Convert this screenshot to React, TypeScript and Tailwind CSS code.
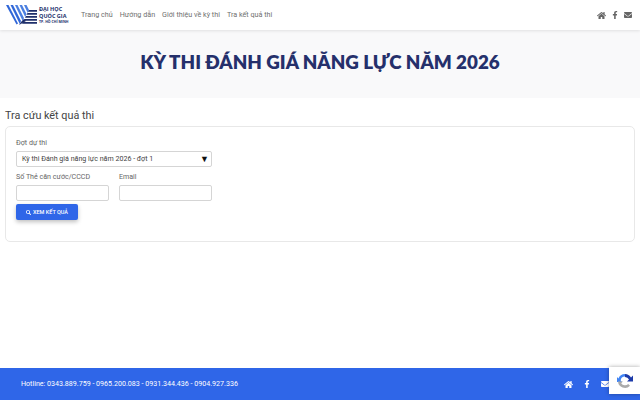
import { FaEnvelope, FaFacebookF, FaHome, FaSearch } from "react-icons/fa";

const navItems = ["Trang chủ", "Hướng dẫn", "Giới thiệu về kỳ thi", "Tra kết quả thi"];

const SocialIcons = ({ className }: { className: string }) => (
  <div className={`flex items-center ${className}`}>
    <FaHome className="size-[9px]" />
    <FaFacebookF className="size-[8px]" />
    <FaEnvelope className="size-[8px]" />
  </div>
);

const Logo = () => (
  <div className="flex h-[24px] w-[72px] items-center">
    <svg width="31" height="20" viewBox="0 0 31 20" className="shrink-0">
      <path d="M0 0h2.500l9.500 18.500 -1.500 1z" fill="#2f66d8" />
      <path d="M4.500 0h2.500l8 16 -1.200 3z" fill="#2f66d8" />
      <path d="M9 0h2.500l6.500 13 -1.300 3z" fill="#4b7fe0" />
      <path d="M13.500 0h2.500l4.500 9 -1.300 3z" fill="#4b7fe0" />
      <path d="M18 0h2.500l2.500 5 -1.300 3z" fill="#4b7fe0" />
      <path d="M13 20l2-3 3-3 2 2z" fill="#1f2f6b" />
      <path d="M23 5h8v1.800h-9zM21.500 8h9.500v1.800h-10.500zM20 11h11v1.800h-12zM18.500 14h12.500v1.800h-13.500zM17 17h14v1.800h-15z" fill="#1f2f6b" />
    </svg>
    <div className="ml-[2px] flex flex-col font-['Open_Sans',sans-serif] font-bold text-[#22306b]">
      <span className="text-[5.500px] leading-[6.500px]">ĐẠI HỌC</span>
      <span className="text-[5.500px] leading-[6.500px]">QUỐC GIA</span>
      <span className="text-[3.500px] leading-[5px]">TP. HỒ CHÍ MINH</span>
    </div>
  </div>
);

export default function App() {
  return (
    <div className="relative flex h-[400px] w-[640px] flex-col overflow-hidden bg-white font-['Roboto',sans-serif]">
      <header className="z-10 flex h-[30px] shrink-0 items-center bg-white pl-[6px] pr-[8px] shadow-[0_1px_3px_rgba(0,0,0,0.1)]">
        <Logo />
        <nav className="ml-[3px] flex gap-[7px] text-[7.200px] text-[#6f6f6f]">
          {navItems.map((item) => (
            <a key={item}>{item}</a>
          ))}
        </nav>
        <SocialIcons className="ml-auto gap-[5px] text-[#666666]" />
      </header>

      <section className="flex h-[68px] shrink-0 items-center justify-center bg-[#f9f9fa] pb-[3px]">
        <h1 className="font-['Lato',sans-serif] text-[18.800px] font-extrabold text-[#25306b]">
          KỲ THI ĐÁNH GIÁ NĂNG LỰC NĂM 2026
        </h1>
      </section>

      <main className="flex-1 px-[5px] pt-[10px]">
        <h2 className="text-[10.800px] leading-[16px] text-[#444444]">Tra cứu kết quả thi</h2>
        <div className="mt-[2px] h-[116px] rounded-[5px] border border-[#e8e8e8] px-[10px] pt-[10px]">
          <div className="w-[196px] text-[7.100px] text-[#666666]">
            <label className="block leading-[11px]">Đợt dự thi</label>
            <div className="relative mt-[3px] flex h-[16px] items-center rounded-[2px] border border-[#d5d5d5] pl-[5px] text-[#444444]">
              Kỳ thi Đánh giá năng lực năm 2026 - đợt 1
              <span className="absolute right-[2px] text-[9px] leading-none text-[#111111]">▼</span>
            </div>
            <div className="mt-[4px] grid grid-cols-2 gap-[10px]">
              <div>
                <label className="block leading-[11px]">Số Thẻ căn cước/CCCD</label>
                <input className="mt-[3px] block h-[16px] w-full rounded-[2px] border border-[#d5d5d5]" />
              </div>
              <div>
                <label className="block leading-[11px]">Email</label>
                <input className="mt-[3px] block h-[16px] w-full rounded-[2px] border border-[#d5d5d5]" />
              </div>
            </div>
            <button className="mt-[3px] flex h-[16px] w-[62px] items-center justify-center gap-[2px] rounded-[2px] bg-[#2f66e8] text-[5.500px] font-medium text-white shadow-[0_2px_4px_rgba(0,0,0,0.25)]">
              <FaSearch className="size-[5px]" />
              XEM KẾT QUẢ
            </button>
          </div>
        </div>
      </main>

      <footer className="flex h-[32px] shrink-0 items-center bg-[#2f66e8] pl-[21px] pr-[31px] text-white">
        <span className="text-[7.100px]">
          Hotline: 0343.889.759 - 0965.200.083 - 0931.344.436 - 0904.927.336
        </span>
        <SocialIcons className="ml-auto gap-[10px]" />
      </footer>

      <div className="absolute bottom-[6px] right-0 flex h-[27px] w-[31px] items-center justify-center bg-white shadow-[0_0_4px_rgba(0,0,0,0.35)]">
        <svg width="18" height="18" viewBox="0 0 18 18" fill="none">
          <path d="M9 2a7 7 0 0 1 6 3.500l2-2v6h-6l2-2a4.500 4.500 0 0 0-4-2.500z" fill="#1c3aa9" />
          <path d="M9 2a7 7 0 0 0-6.600 4.600L1 5v5h5L4.600 8.400A4.500 4.500 0 0 1 9 4.500z" fill="#4285f4" />
          <path d="M2 9.500h5l-1.800 1.800a4.500 4.500 0 0 0 7 .7l1.800 1.800A7 7 0 0 1 2 9.500z" fill="#ababab" />
        </svg>
      </div>
    </div>
  );
}
